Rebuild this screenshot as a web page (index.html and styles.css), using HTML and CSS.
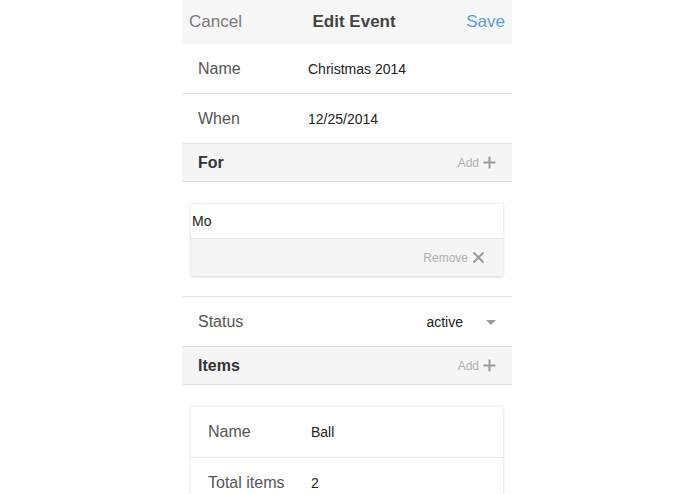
FILE: index.html
```html
<!DOCTYPE html>
<html>
<head>
<meta charset="utf-8">
<link rel="stylesheet" href="styles.css">
</head>
<body>
<div class="app">
  <div class="topbar">
    <span class="cancel">Cancel</span>
    <span class="title">Edit Event</span>
    <span class="save">Save</span>
  </div>
  <div class="row">
    <span class="label">Name</span>
    <span class="value">Christmas 2014</span>
  </div>
  <div class="row">
    <span class="label">When</span>
    <span class="value">12/25/2014</span>
  </div>
  <div class="section-head">
    <span class="head-title">For</span>
    <span class="add">Add
      <svg class="plus" width="13" height="13" viewBox="0 0 13 13"><path d="M6.5 0.5v12M0.5 6.5h12" stroke="#9a9a9a" stroke-width="2" fill="none"/></svg>
    </span>
  </div>
  <div class="section-body">
    <div class="card">
      <div class="card-input">Mo</div>
      <div class="card-foot">
        <span class="remove">Remove
          <svg class="xicon" width="13" height="13" viewBox="0 0 13 13"><path d="M1.5 1.5l10 10M11.5 1.5l-10 10" stroke="#9a9a9a" stroke-width="2" fill="none"/></svg>
        </span>
      </div>
    </div>
  </div>
  <div class="row status">
    <span class="label">Status</span>
    <span class="select">active
      <svg class="caret" width="10" height="5" viewBox="0 0 10 5"><path d="M0 0h10L5 5z" fill="#9a9a9a"/></svg>
    </span>
  </div>
  <div class="section-head">
    <span class="head-title">Items</span>
    <span class="add">Add
      <svg class="plus" width="13" height="13" viewBox="0 0 13 13"><path d="M6.5 0.5v12M0.5 6.5h12" stroke="#9a9a9a" stroke-width="2" fill="none"/></svg>
    </span>
  </div>
  <div class="section-body items">
    <div class="card">
      <div class="item-row">
        <span class="item-label">Name</span>
        <span class="value">Ball</span>
      </div>
      <div class="item-row">
        <span class="item-label">Total items</span>
        <span class="value">2</span>
      </div>
    </div>
  </div>
</div>
</body>
</html>
```
FILE: styles.css
```css
html, body {
  margin: 0;
  padding: 0;
  background: #ffffff;
  overflow: hidden;
  height: 494px;
}
body {
  font-family: "Liberation Sans", Arial, Helvetica, sans-serif;
  color: #222;
}
.app {
  width: 330px;
  margin-left: calc(50% - 165.5px);
  height: 494px;
  overflow: hidden;
}
.topbar {
  height: 44px;
  background: #f7f7f7;
  display: flex;
  align-items: center;
  justify-content: space-between;
  padding: 0 7px;
  font-size: 17px;
}
.cancel { color: #7a7a7a; }
.title { color: #444; font-weight: bold; }
.save { color: #5b9ae2; }
.row {
  height: 48px;
  border-bottom: 1px solid #e2e2e2;
  display: flex;
  align-items: center;
  padding: 1px 16px 0;
}
.label {
  width: 110px;
  font-size: 16px;
  color: #555;
}
.value {
  font-size: 14px;
  color: #222;
}
.section-head {
  height: 37px;
  background: #f5f5f5;
  border-bottom: 1px solid #e0e0e0;
  display: flex;
  align-items: center;
  justify-content: space-between;
  padding: 0 16px;
}
.head-title {
  font-size: 16px;
  font-weight: bold;
  color: #333;
}
.add {
  display: flex;
  align-items: center;
  gap: 4px;
  font-size: 12px;
  color: #b0b0b0;
}
.section-body {
  padding: 21px 9px 20px;
  border-bottom: 1px solid #e2e2e2;
}
.section-body.items {
  border-bottom: none;
}
.card {
  background: #fff;
  box-shadow: 0 1px 3px rgba(0,0,0,0.18);
  border-top: 1px solid #f0f0f0;
}
.card-input {
  height: 34px;
  display: flex;
  align-items: center;
  padding: 0 1px;
  font-size: 14px;
  color: #222;
  border-bottom: 1px solid #e3e3e3;
}
.card-foot {
  height: 37px;
  background: #f5f5f5;
  display: flex;
  align-items: center;
  justify-content: flex-end;
  padding: 0 18px;
}
.remove {
  display: flex;
  align-items: center;
  gap: 4px;
  font-size: 12px;
  color: #b0b0b0;
}
.status .label { flex: 1; }
.select {
  display: flex;
  align-items: center;
  gap: 23px;
  font-size: 14px;
  color: #222;
}
.item-row {
  height: 50px;
  display: flex;
  align-items: center;
  padding: 0 17px;
  border-bottom: 1px solid #e3e3e3;
}
.item-label {
  width: 103px;
  font-size: 16px;
  color: #555;
}
```
